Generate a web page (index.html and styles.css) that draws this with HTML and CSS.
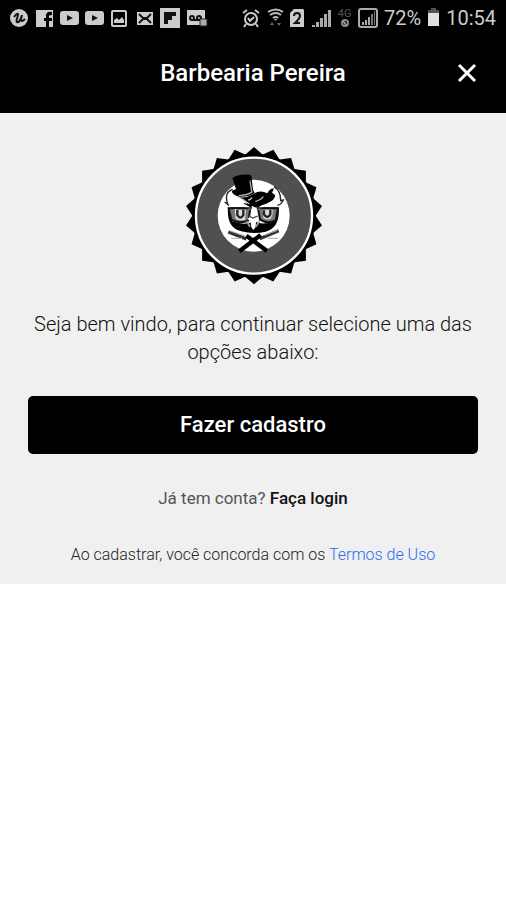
FILE: index.html
```html
<!DOCTYPE html>
<html lang="pt-BR">
<head>
<meta charset="utf-8">
<meta name="viewport" content="width=device-width, initial-scale=1">
<title>Barbearia Pereira</title>
<link rel="stylesheet" href="styles.css">
</head>
<body>
<div class="status-bar">
  <div class="notifications">
    <svg width="20" height="22" viewBox="0 0 20 22"><circle cx="10" cy="11" r="9" fill="#ccc"/><path d="M5 10q3-4 4-3c1 1-3 7-1 8s4-3 5-7c-1 4-2 6 0 6q1 0 3-2" fill="none" stroke="#111" stroke-width="2"/></svg>
    <svg width="20" height="22" viewBox="0 0 20 22"><path d="M2 3h17v17h-4v-6h3v-3h-3V9q0-1 3-1V5q-6-1-6 4v2h-2v3h2v6H2z" fill="#ccc"/></svg>
    <svg width="20" height="22" viewBox="0 0 20 22"><rect x="1" y="4" width="19" height="14" rx="3" fill="#ccc"/><path d="M8 8l6 3-6 3z" fill="#111"/></svg>
    <svg width="20" height="22" viewBox="0 0 20 22"><rect x="1" y="4" width="19" height="14" rx="3" fill="#ccc"/><path d="M8 8l6 3-6 3z" fill="#111"/></svg>
    <svg width="20" height="22" viewBox="0 0 20 22"><rect x="3" y="4" width="14" height="15" rx="1" fill="none" stroke="#ccc" stroke-width="2"/><path d="M5 16v-3l3-2 2 2 3-3 2 3v3z" fill="#ccc"/></svg>
    <svg width="20" height="22" viewBox="0 0 20 22"><rect x="3" y="5" width="16" height="13" fill="#ccc"/><path d="M5 7l4 4h4l4-4M5 16l4-4h4l4 4" fill="none" stroke="#111" stroke-width="2"/></svg>
    <svg width="22" height="22" viewBox="0 0 22 22"><rect x="1" y="1" width="20" height="20" fill="#ccc"/><path d="M5 5h12v4h-4v4H9v4H5z" fill="#111"/></svg>
    <svg width="22" height="22" viewBox="0 0 22 22"><rect x="1" y="3" width="18" height="15" fill="#ccc"/><path d="M5 13h10" stroke="#111" stroke-width="2"/><circle cx="6" cy="11" r="2" fill="none" stroke="#111" stroke-width="2"/><circle cx="13" cy="11" r="2" fill="none" stroke="#111" stroke-width="2"/><rect x="14" y="12" width="7" height="7" fill="#aaa" stroke="#222"/></svg>
  </div>
  <div class="system">
    <svg width="20" height="22" viewBox="0 0 20 22"><g fill="none" stroke="#ccc" stroke-width="2"><circle cx="10" cy="12" r="6"/><path d="M2 6l4-3M18 6l-4-3M5 17l-2 3M15 17l2 3M7 11l2 3 4-4"/></g></svg>
    <svg width="17" height="22" viewBox="0 0 17 22"><g fill="none" stroke="#bbb" stroke-width="2"><path d="M1 5q8-5 15 0M3 8q6-4 11 0M6 11q3-2 5 0"/></g><path d="M7 12h3l-1 2z" fill="#bbb"/><path d="M3 18l2-3 2 3zM10 16h4l-2 3z" fill="#666"/></svg>
    <svg width="14" height="22" viewBox="0 0 14 22"><path d="M4 2h9l1 1v17H0V6z" fill="#ccc"/><path d="M4 9q0-3 3-3t3 3q0 2-5 7h5" fill="none" stroke="#111" stroke-width="2"/></svg>
    <svg width="21" height="22" viewBox="0 0 21 22"><path d="M2 18h3v2H2zM6 15h3v5H6zM10 11h3v9h-3zM14 7h3v13h-3zM18 3h3v17h-3z" fill="#aaa"/></svg>
    <span class="network"><span class="network-type">4G</span><svg width="10" height="9" viewBox="0 0 10 9"><circle cx="5" cy="4" r="3" fill="none" stroke="#888" stroke-width="2"/><path d="M3 2l4 5" stroke="#999" stroke-width="2"/></svg></span>
    <svg width="20" height="22" viewBox="0 0 20 22"><rect x="1" y="2" width="18" height="18" rx="2" fill="none" stroke="#aaa" stroke-width="2"/><path d="M4 15h2v3H4zM7 13h2v5H7zM10 10h2v8h-2z" fill="#aaa"/><path d="M13 7h2v11h-2zM16 4h1v14h-1z" fill="#777"/></svg>
    <span class="battery-level">72%</span>
    <svg width="13" height="22" viewBox="0 0 13 22"><path d="M4 1h5v2h3v4H1V3h3z" fill="#555"/><path d="M1 6h11v13H1z" fill="#e0e0e0"/></svg>
    <time>10:54</time>
  </div>
</div>
<header class="header">
  <h1 class="title">Barbearia Pereira</h1>
  <button class="close" type="button" aria-label="Fechar"><svg width="20" height="20" viewBox="0 0 20 20"><path d="M2 2l16 16M18 2L2 18" stroke="#fff" stroke-width="3"/></svg></button>
</header>
<main class="welcome">
  <svg class="logo" width="150" height="150" viewBox="-6 0 450 450" role="img" aria-label="Barbearia Pereira">
    <defs><path id="teeth" d="M0-206l30 26h-60zM0 206l30-26h-60z"/></defs>
    <g transform="translate(222 227)">
      <use href="#teeth"/><use href="#teeth" transform="rotate(16.364)"/><use href="#teeth" transform="rotate(32.727)"/><use href="#teeth" transform="rotate(49.091)"/><use href="#teeth" transform="rotate(65.455)"/><use href="#teeth" transform="rotate(81.818)"/><use href="#teeth" transform="rotate(98.182)"/><use href="#teeth" transform="rotate(114.545)"/><use href="#teeth" transform="rotate(130.909)"/><use href="#teeth" transform="rotate(147.273)"/><use href="#teeth" transform="rotate(163.636)"/>
      <circle r="186"/>
      <circle r="174" fill="#505050" stroke="#fff" stroke-width="7"/>
    </g>
    <circle cx="221" cy="227" r="108" fill="#fff"/>
    <!-- horns -->
    <path d="M158 148q-28 10-14 46l-10-8M282 140q20 12 20 42l8-2q-6 14-18 16" fill="none" stroke="#222" stroke-width="4"/>
    <path d="M154 152q-12 20 2 42l18-6q-16-14-12-36zM274 146q22 20 16 44l-16-4q8-16 0-40z" fill="#fff"/>
    <!-- forehead feathers -->
    <path d="M168 170q27 8 52-8 20-14 42-2 8-16 20-14l-6 12 10 8q-4 18-22 22-12 18-40 14l-6-4-6 4q-14-2-22-14l12 4q-6-16-34-22z"/>
    <path d="M186 176l22 16M216 172q-4 8-12 8M250 170q-10 12-24 14" fill="none" stroke="#bbb" stroke-width="4"/>
    <!-- lower face -->
    <path d="M144 202q-5 62 40 72 35 9 73 1 44-12 39-73l-14 42q-34 13-60 0-27 14-65 0z"/>
    <path d="M146 205h65l-5 36q-27 12-52-2zM234 205h60l-7 36q-25 12-47-2z" fill="#777" stroke="#111" stroke-width="6"/>
    <path d="M164 206q18 5 34 3l-3 31q-18 4-28-4zM248 209h30q2 16-6 27-14 4-22-2z" fill="#ddd"/>
    <path d="M172 209v16q9 16 18 0v-16M252 211v12q10 16 19 0v-14" fill="none" stroke="#222" stroke-width="7"/>
    <path d="M162 190q24 0 50 16M284 190q-24 0-50 16" fill="none" stroke="#fff" stroke-width="7"/>
    <path d="M150 204h66M230 204h62" stroke="#111" stroke-width="5"/>
    <path d="M216 204h12l-2 24 10 10-8 8-1 16-7 8-6-8-2-16-9-9 9-9z" fill="#fff"/>
    <path d="M206 228l13 6 14-6" fill="none" stroke="#444" stroke-width="4"/>
    <path d="M200 244l10 16M238 244l-10 16" stroke="#999" stroke-width="6"/>
    <!-- top hat -->
    <path d="M157 114q8-7 30-10 24-2 27 3l5 42 5 10q-24 14-47 11-19-4-22-17l13-6z"/>
    <path d="M210 122l5 32M176 167q26-1 42-12" fill="none" stroke="#aaa" stroke-width="4"/>
    <!-- crossed razors -->
    <path d="M145 276l54 21M296 272l-57 24" stroke="#333" stroke-width="10"/>
    <path d="M151 273l44 15M292 271l-39 15" stroke="#aaa" stroke-width="3"/>
    <path d="M199 287l62 46M242 285l-64 49" stroke="#000" stroke-width="13"/>
    <path d="M154 295h32M264 295h30" stroke="#bbb" stroke-width="4"/>
  </svg>
  <p class="intro">Seja bem vindo, para continuar selecione uma das opções abaixo:</p>
  <button class="signup" type="button">Fazer cadastro</button>
  <p class="login">Já tem conta? <a href="#login">Faça login</a></p>
  <p class="terms">Ao cadastrar, você concorda com os <a href="#termos">Termos de Uso</a></p>
</main>
</body>
</html>
```
FILE: styles.css
```css
* { box-sizing: border-box; }
body { margin: 0; background: #fff; color: #111; font-family: Roboto, sans-serif; }
svg { display: block; flex: none; }
.status-bar { display: flex; justify-content: space-between; align-items: center; height: 36px; padding: 0 10px 0 9px; background: #000; color: #ccc; font-size: 20px; line-height: 24px; }
.notifications { display: flex; align-items: center; gap: 5px; }
.system { display: flex; align-items: center; gap: 6px; }
.network { display: flex; flex-direction: column; align-items: center; width: 15px; }
.network-type { color: #555; font-size: 11px; line-height: 10px; }
.header { display: grid; grid-template-columns: 48px 1fr 48px; align-items: center; height: 77px; padding: 0 15px 4px; background: #000; color: #fff; }
.title { grid-column: 2; margin: 0; font-size: 24px; font-weight: 500; line-height: 32px; text-align: center; }
.close { display: flex; align-items: center; justify-content: center; height: 48px; padding: 0; border: 0; background: none; cursor: pointer; }
.welcome { display: flex; flex-direction: column; align-items: center; padding: 27px 28px 16px; background: #f0f0f0; text-align: center; }
.intro { margin: 20px 0 0; font-size: 20px; font-weight: 300; line-height: 28px; }
.signup { width: 100%; height: 58px; margin-top: 30px; border: 0; border-radius: 5px; background: #000; color: #fff; font: 500 22px/28px Roboto, sans-serif; cursor: pointer; }
.login { margin: 32px 0 0; color: #555; font-size: 17px; line-height: 24px; }
.login a { color: #111; font-weight: 500; text-decoration: none; }
.terms { margin: 32px 0 0; color: #222; font-size: 16px; font-weight: 300; line-height: 26px; }
.terms a { color: #2f6af0; text-decoration: none; }
```
